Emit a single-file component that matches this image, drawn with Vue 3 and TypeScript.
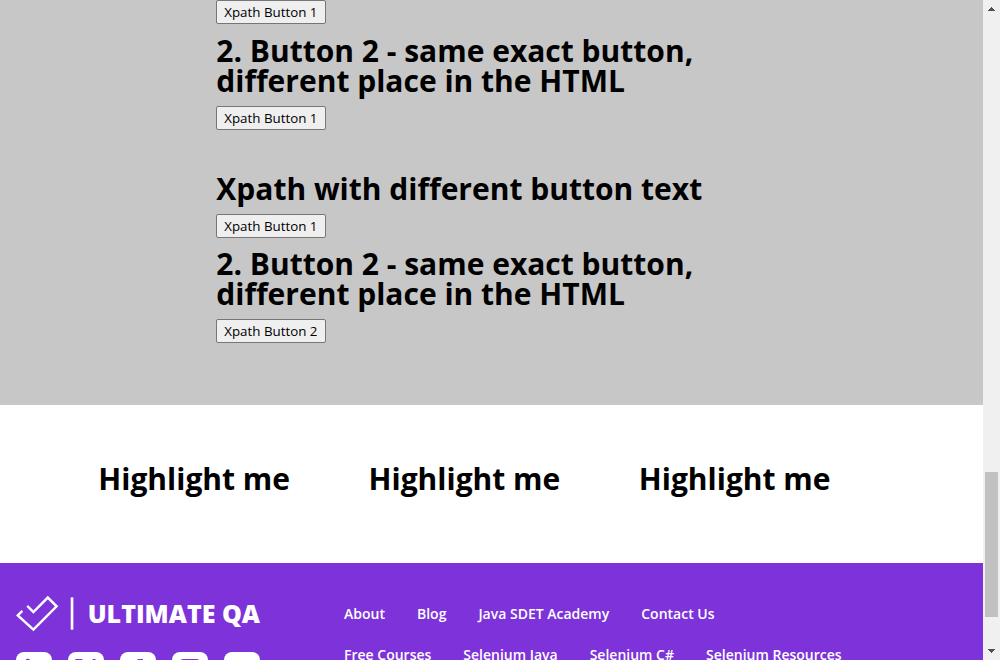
<script setup lang="ts">
interface Example {
  title: string
  button: string
}

const groups: Example[][] = [
  [
    { title: '', button: 'Xpath Button 1' },
    { title: '2. Button 2 - same exact button, different place in the HTML', button: 'Xpath Button 1' },
  ],
  [
    { title: 'Xpath with different button text', button: 'Xpath Button 1' },
    { title: '2. Button 2 - same exact button, different place in the HTML', button: 'Xpath Button 2' },
  ],
]

const highlights: string[] = ['Highlight me', 'Highlight me', 'Highlight me']

const links: string[][] = [
  ['About', 'Blog', 'Java SDET Academy', 'Contact Us'],
  ['Free Courses', 'Selenium Java', 'Selenium C#', 'Selenium Resources'],
]

const socials: { name: string; path: string }[] = [
  { name: 'LinkedIn', path: 'M9.500 9a2.300 2.300 0 1 1 4.600 0a2.300 2.300 0 0 1-4.600 0M10 13h4v14h-4zM16 13h4v2q1-2 4-2q4 0 4 5v9h-4v-8q0-3-2-3t-2 3v8h-4z' },
  { name: 'X', path: 'M7 7h7l5 7l6-7h3l-7.500 9L29 29h-7l-5.500-8L10 29H7l8-10z' },
  { name: 'Facebook', path: 'M15 29V19h-3v-4h3v-3q0-5 5-5h3v4h-2q-2 0-2 2v2h4l-1 4h-3v10z' },
  { name: 'Instagram', path: 'M12 7h12q5 0 5 5v12q0 5-5 5H12q-5 0-5-5V12q0-5 5-5zM12 9q-3 0-3 3v12q0 3 3 3h12q3 0 3-3V12q0-3-3-3zM18 13a5 5 0 1 0 0 10a5 5 0 0 0 0-10z' },
  { name: 'YouTube', path: 'M10 10h16q3 0 3 3v10q0 3-3 3H10q-3 0-3-3V13q0-3 3-3zM16 14v8l6-4z' },
]
</script>

<template>
  <div class="window">
    <div class="page">
      <main>
        <section class="examples">
          <div class="examples-inner">
            <div v-for="(group, g) in groups" :key="g" class="group">
              <div v-for="(item, i) in group" :key="i" class="example">
                <h2 v-if="item.title" class="heading">{{ item.title }}</h2>
                <button type="button" class="xpath-button">{{ item.button }}</button>
              </div>
            </div>
          </div>
        </section>
        <section class="highlights">
          <h2 v-for="(text, i) in highlights" :key="i" class="heading">{{ text }}</h2>
        </section>
      </main>
      <footer class="footer">
        <div class="brand">
          <a href="#" class="logo" aria-label="Ultimate QA">
            <svg class="mark" width="60" height="38" viewBox="0 0 60 38" fill="none" stroke="#fff">
              <path d="M6.500 15.800L1.800 20.500L17.800 35L41.500 11.200L32.500 2.200L17.800 17L11.500 10.800" stroke-width="2.500" />
              <path d="M57.300 2v33" stroke-width="2.700" />
            </svg>
            <span class="wordmark">ULTIMATE QA</span>
          </a>
          <div class="socials">
            <a v-for="s in socials" :key="s.name" href="#" class="social" :aria-label="s.name">
              <svg width="36" height="36" viewBox="0 0 36 36" fill="#7d33d9" fill-rule="evenodd"><path :d="s.path" /></svg>
            </a>
          </div>
        </div>
        <nav class="nav" aria-label="Footer">
          <div v-for="(row, r) in links" :key="r" class="nav-row">
            <a v-for="link in row" :key="link" href="#">{{ link }}</a>
          </div>
        </nav>
      </footer>
    </div>
    <div class="scrollbar" aria-hidden="true">
      <svg width="17" height="17" viewBox="0 0 17 17" fill="#505050"><path d="M5 11h7v-1h-1v-1h-1v-1h-1v-1h-1v1h-1v1h-1v1h-1z" /></svg>
      <div class="track"><div class="thumb"></div></div>
      <svg width="17" height="17" viewBox="0 0 17 17" fill="#505050"><path d="M5 6h7v1h-1v1h-1v1h-1v1h-1v-1h-1v-1h-1v-1h-1z" /></svg>
    </div>
  </div>
</template>

<style>
body {
  margin: 0;
}
</style>

<style scoped>
.window {
  display: flex;
  height: 100vh;
  overflow: hidden;
  font-family: "Open Sans", "Noto Sans", sans-serif;
  color: #000;
  background: #fff;
}
.page {
  flex: 1;
  min-width: 0;
  display: flex;
  flex-direction: column;
}
.examples {
  background: #c7c7c7;
  padding-bottom: 62px;
}
.examples-inner {
  width: 56%;
  margin: 0 auto;
}
.group {
  display: flex;
  flex-direction: column;
  gap: 12px;
}
.group + .group {
  margin-top: 44px;
  gap: 11px;
}
.heading {
  margin: 0;
  font-size: 30px;
  line-height: 30px;
  font-weight: 700;
}
.example {
  display: flex;
  flex-direction: column;
  align-items: flex-start;
  gap: 10px;
}
.xpath-button {
  height: 24px;
  min-width: 110px;
  padding: 0 7px;
  font-family: "Open Sans", "Noto Sans", sans-serif;
  line-height: 20px;
  text-align: left;
  color: #000;
  background: #efefef;
  border: 1px solid #767676;
  border-radius: 2px;
}
.highlights {
  display: grid;
  grid-template-columns: repeat(3, 27.5%);
  column-gap: 54px;
  padding: 59px 10% 69px;
}
.footer {
  flex: 1;
  min-height: 0;
  overflow: hidden;
  display: flex;
  gap: 84px;
  padding: 32px 16px 0;
  box-sizing: border-box;
  color: #fff;
  background: #7d33d9;
}
.logo {
  display: flex;
  align-items: flex-start;
  gap: 13px;
  color: #fff;
  text-decoration: none;
}
.wordmark {
  font: 800 25px/36px "Open Sans", sans-serif;
  white-space: nowrap;
}
.brand {
  display: flex;
  flex-direction: column;
  gap: 19px;
  flex: 0 0 244px;
  min-width: 0;
}
.socials {
  display: flex;
  gap: 16px;
}
.social {
  height: 36px;
  border-radius: 8px;
  background: #fff;
}
.nav {
  display: flex;
  flex-direction: column;
  gap: 17px;
  padding-top: 7px;
}
.nav-row {
  display: flex;
  gap: 32px;
}
.nav a {
  font-size: 14px;
  line-height: 24px;
  font-weight: 600;
  color: #fff;
  text-decoration: none;
  white-space: nowrap;
}
.scrollbar {
  display: flex;
  flex-direction: column;
  flex: 0 0 17px;
  background: #f0f0f0;
}
.track {
  flex: 1;
  display: flex;
  flex-direction: column;
  justify-content: flex-end;
  padding: 0 2px 26px;
}
.thumb {
  height: 145px;
  background: #c1c1c1;
}
</style>
